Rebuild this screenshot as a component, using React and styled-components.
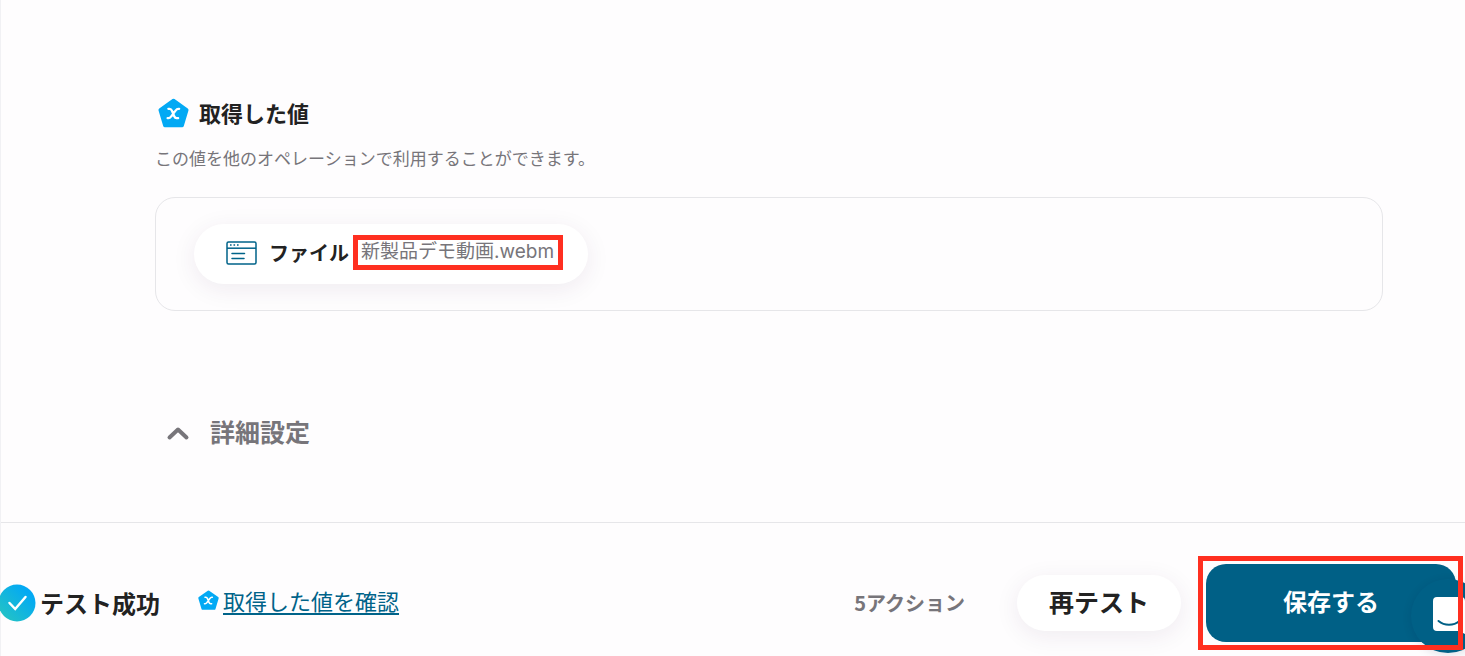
import React from 'react';
import styled, { createGlobalStyle } from 'styled-components';

const GlobalStyle = createGlobalStyle`
  * {
    box-sizing: border-box;
  }

  body {
    margin: 0;
    background: #fefdfe;
    color: #222222;
    font-family: "Noto Sans CJK JP", sans-serif;
    overflow: hidden;
  }

  button {
    font-family: inherit;
    cursor: pointer;
  }
`;

const Page = styled.div`
  display: flex;
  flex-direction: column;
  min-height: 100vh;
  border-left: 1px solid #f1f1f4;
`;

const Main = styled.main`
  flex: 1;
  padding: 95px 82px 0 154px;
`;

const Heading = styled.h2`
  display: flex;
  align-items: center;
  gap: 10px;
  margin: 0;
  padding-left: 3px;
  font-size: 22px;
  line-height: 34px;
  font-weight: 700;

  span {
    padding-bottom: 2px;
  }
`;

const Description = styled.p`
  margin: 14px 0 27px;
  font-size: 17px;
  line-height: 25px;
  color: #77757a;
`;

const ValueCard = styled.div`
  display: flex;
  padding: 26px 38px;
  border: 1px solid #e6e6e9;
  border-radius: 20px;
`;

const FileChip = styled.div`
  display: flex;
  align-items: center;
  height: 60px;
  padding: 0 25px 3px 32px;
  border-radius: 30px;
  background: #ffffff;
  box-shadow: 0 5px 24px rgba(60, 30, 80, 0.08);
`;

const FileLabel = styled.span`
  margin: 0 4px 0 12px;
  font-size: 20px;
  font-weight: 700;
`;

const Highlight = styled.div`
  position: relative;
  z-index: ${(props) => (props.$front ? 3 : 0)};
  display: flex;
  padding: ${(props) => props.$space};
  border: 5px solid #ff2f20;
  ${(props) => props.$front && 'pointer-events: none;'}
`;

const FileName = styled.span`
  font-family: Inter, "Noto Sans CJK JP", sans-serif;
  font-size: 19px;
  line-height: 22px;
  color: #77757a;
`;

const DetailToggle = styled.button`
  display: flex;
  align-items: center;
  gap: 20px;
  margin: 102px 0 0;
  padding: 0 11px;
  border: 0;
  background: none;
  color: #77757a;
  font-size: 25px;
  line-height: 36px;
  font-weight: 700;

  svg {
    margin-top: 4px;
  }
`;

const Footer = styled.footer`
  display: flex;
  align-items: center;
  height: 134px;
  padding: 26px 2px 0 0;
  border-top: 1px solid #e6e6e9;
`;

const Status = styled.div`
  display: flex;
  align-items: center;
  gap: 4px;
  margin-left: -3px;
  font-size: 24px;
  font-weight: 700;
`;

const ConfirmLink = styled.a`
  display: flex;
  align-items: center;
  gap: 4px;
  margin-left: 38px;
  padding-bottom: 5px;
  color: #006389;
  font-size: 22px;
  line-height: 32px;
  text-decoration: none;

  span {
    text-decoration: underline;
    text-decoration-thickness: 2px;
    text-underline-offset: 3px;
  }
`;

const ActionCount = styled.span`
  margin: 0 52px 0 auto;
  color: #77757a;
  font-size: 20px;
  font-weight: 700;
`;

const RetestButton = styled.button`
  height: 56px;
  margin-right: 17px;
  padding: 0 32px 4px;
  border: 0;
  border-radius: 28px;
  background: #ffffff;
  box-shadow: 0 5px 24px rgba(60, 30, 80, 0.08);
  color: #222222;
  font-size: 25px;
  font-weight: 700;
`;

const SaveButton = styled.button`
  width: 250px;
  height: 78px;
  padding: 0 0 4px;
  border: 0;
  border-radius: 20px;
  background: #006086;
  color: #ffffff;
  font-size: 24px;
  font-weight: 700;
`;

const SaveArea = styled.div`
  display: grid;

  > * {
    grid-area: 1 / 1;
  }
`;

const SaveSlot = styled.div`
  padding: 8px 7px 8px 8px;
`;

const ChatButton = styled.button`
  position: fixed;
  right: -20px;
  bottom: 3px;
  z-index: 2;
  display: flex;
  align-items: center;
  justify-content: flex-start;
  width: 74px;
  height: 74px;
  padding: 0 0 0 22px;
  border: 0;
  border-radius: 50%;
  background: #006086;
  box-shadow: 0 2px 10px rgba(0, 20, 60, 0.12);
`;

const ValueIcon = ({ size }) => (
  <svg width={size} height={size} viewBox="0 0 30 30" aria-hidden="true">
    <path
      d="M15 2.5 27.8 11.5 23.3 26.500H6.700L2.200 11.500Z"
      fill="#03a9f4"
      stroke="#03a9f4"
      strokeWidth="3.5"
      strokeLinejoin="round"
    />
    <path
      d="M10 10.500h1.200c1.200 0 1.800.6 2.300 1.800l2.200 5.400c.5 1.200 1.100 1.800 2.300 1.800h1.500M20.500 10.500h-.8c-1.200 0-1.900.6-2.700 1.700l-4.200 5.600c-.8 1.100-1.500 1.700-2.700 1.700h-.8"
      fill="none"
      stroke="#ffffff"
      strokeWidth="2.2"
      strokeLinecap="round"
    />
  </svg>
);

const WindowIcon = () => (
  <svg width="31" height="24" viewBox="0 0 31 24" fill="none" stroke="#006389" aria-hidden="true">
    <rect x="1" y="1" width="29" height="22" rx="1.5" strokeWidth="1.5" />
    <path d="M1 7.2h29" strokeWidth="1.5" />
    <path d="M4 4h1.6M7.5 4h1.6M11 4h1.6" strokeWidth="1.6" />
    <path d="M6 12.5h12.5M6 17.5h12" strokeWidth="1.5" strokeLinecap="round" />
  </svg>
);

const ChevronUpIcon = () => (
  <svg width="24" height="16" viewBox="0 0 24 16" aria-hidden="true">
    <path d="M3.5 12.5 12 4.5l8.5 8" fill="none" stroke="#77757a" strokeWidth="4" strokeLinecap="round" strokeLinejoin="round" />
  </svg>
);

const SuccessIcon = () => (
  <svg width="38" height="38" viewBox="0 0 38 38" aria-hidden="true">
    <defs>
      <linearGradient id="success" x1="0.1" y1="0.9" x2="0.8" y2="0.2">
        <stop offset="0" stopColor="#24c3c4" />
        <stop offset="1" stopColor="#03a9f4" />
      </linearGradient>
    </defs>
    <circle cx="19" cy="19" r="18.5" fill="url(#success)" />
    <path d="m11.5 19 5.7 6 10.3-12" fill="none" stroke="#ffffff" strokeWidth="2.5" strokeLinecap="round" />
  </svg>
);

const ChatIcon = () => (
  <svg width="32" height="38" viewBox="0 0 32 38" aria-hidden="true">
    <path d="M4 0h24a4 4 0 0 1 4 4v33l-6-3H4a4 4 0 0 1-4-4V4a4 4 0 0 1 4-4Z" fill="#ffffff" />
    <path d="M5.5 24c6 5 15 5 21 0" fill="none" stroke="#006086" strokeWidth="2" strokeLinecap="round" />
  </svg>
);

const App = () => {
  return (
    <>
      <GlobalStyle />
      <Page>
        <Main>
          <Heading>
            <ValueIcon size={31} />
            <span>取得した値</span>
          </Heading>
          <Description>この値を他のオペレーションで利用することができます。</Description>
          <ValueCard>
            <FileChip>
              <WindowIcon />
              <FileLabel>ファイル</FileLabel>
              <Highlight $space="1px 4px 2px 3px">
                <FileName>新製品デモ動画.webm</FileName>
              </Highlight>
            </FileChip>
          </ValueCard>
          <DetailToggle type="button" aria-expanded="false">
            <ChevronUpIcon />
            詳細設定
          </DetailToggle>
        </Main>
        <Footer>
          <Status>
            <SuccessIcon />
            テスト成功
          </Status>
          <ConfirmLink href="#values">
            <ValueIcon size={21} />
            <span>取得した値を確認</span>
          </ConfirmLink>
          <ActionCount>5アクション</ActionCount>
          <RetestButton type="button">再テスト</RetestButton>
          <SaveArea>
            <SaveSlot>
              <SaveButton type="button">保存する</SaveButton>
            </SaveSlot>
            <Highlight $front />
          </SaveArea>
        </Footer>
      </Page>
      <ChatButton type="button" aria-label="チャット">
        <ChatIcon />
      </ChatButton>
    </>
  );
};

export default App;
